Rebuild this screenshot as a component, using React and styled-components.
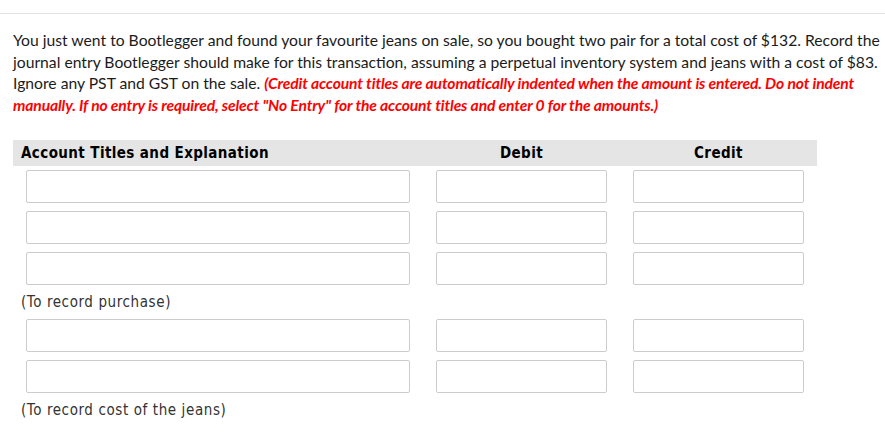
import React from "react";
import styled, { createGlobalStyle } from "styled-components";

const Global = createGlobalStyle`
  html, body { margin: 0; padding: 0; background: #fff; overflow: hidden; }
  body { font-family: Lato, "Open Sans", sans-serif; }
`;

const Page = styled.div`
  width: 885px;
  padding-top: 13px;
  overflow: hidden;
`;

const Rule = styled.hr`
  margin: 0;
  border: 0;
  border-top: 1px solid #e1e1e1;
`;

const Question = styled.p`
  margin: 16px 0 0 13px;
  width: 875px;
  font-family: Lato, sans-serif;
  font-size: 15.7px;
  line-height: 21.7px;
  color: #1b1b1b;
`;

const Note = styled.span`
  color: #ff0000;
  font-weight: 700;
  font-style: italic;
  letter-spacing: -0.15px;
`;

const Table = styled.div`
  margin: 23px 0 0 13px;
  display: grid;
  grid-template-columns: 410px 197px 197px;
  width: 804px;
`;

const HeadCell = styled.div`
  background: #e5e5e5;
  height: 26px;
  line-height: 26px;
  font-family: "DejaVu Sans Condensed", "DejaVu Sans", sans-serif;
  font-weight: 700;
  font-size: 15px;
  letter-spacing: 0.4px;
  color: #000;
  text-align: ${(p) => (p.$left ? "left" : "center")};
  padding-left: ${(p) => (p.$left ? "8px" : "0")};
`;

const Cell = styled.div`
  height: 41px;
  display: flex;
  align-items: center;
  padding: 0 13px;
`;

const Field = styled.input`
  box-sizing: border-box;
  width: 100%;
  height: 33px;
  border: 1px solid #cccccc;
  border-radius: 2px;
  background: #fff;
  outline: none;
`;

const Explain = styled.div`
  grid-column: 1 / -1;
  height: 26px;
  line-height: 26px;
  padding-left: 8px;
  font-family: "DejaVu Sans Condensed", "DejaVu Sans", sans-serif;
  font-size: 15px;
  letter-spacing: 0.6px;
  color: #333;
`;

const groups = [
  { rows: 3, note: "(To record purchase)" },
  { rows: 2, note: "(To record cost of the jeans)" },
];

export default function App() {
  return (
    <Page>
      <Global />
      <Rule />
      <Question>
        You just went to Bootlegger and found your favourite jeans on sale, so you bought two pair for a total cost of $132. Record the journal entry Bootlegger should make for this transaction, assuming a perpetual inventory system and jeans with a cost of $83. Ignore any PST and GST on the sale.{" "}
        <Note>
          (Credit account titles are automatically indented when the amount is entered. Do not indent manually. If no entry is required, select "No Entry" for the account titles and enter 0 for the amounts.)
        </Note>
      </Question>
      <Table>
        <HeadCell $left>Account Titles and Explanation</HeadCell>
        <HeadCell>Debit</HeadCell>
        <HeadCell>Credit</HeadCell>
        {groups.map((g, gi) => (
          <React.Fragment key={gi}>
            {Array.from({ length: g.rows }).map((_, ri) => (
              <React.Fragment key={ri}>
                <Cell><Field /></Cell>
                <Cell><Field /></Cell>
                <Cell><Field /></Cell>
              </React.Fragment>
            ))}
            <Explain>{g.note}</Explain>
          </React.Fragment>
        ))}
      </Table>
    </Page>
  );
}
